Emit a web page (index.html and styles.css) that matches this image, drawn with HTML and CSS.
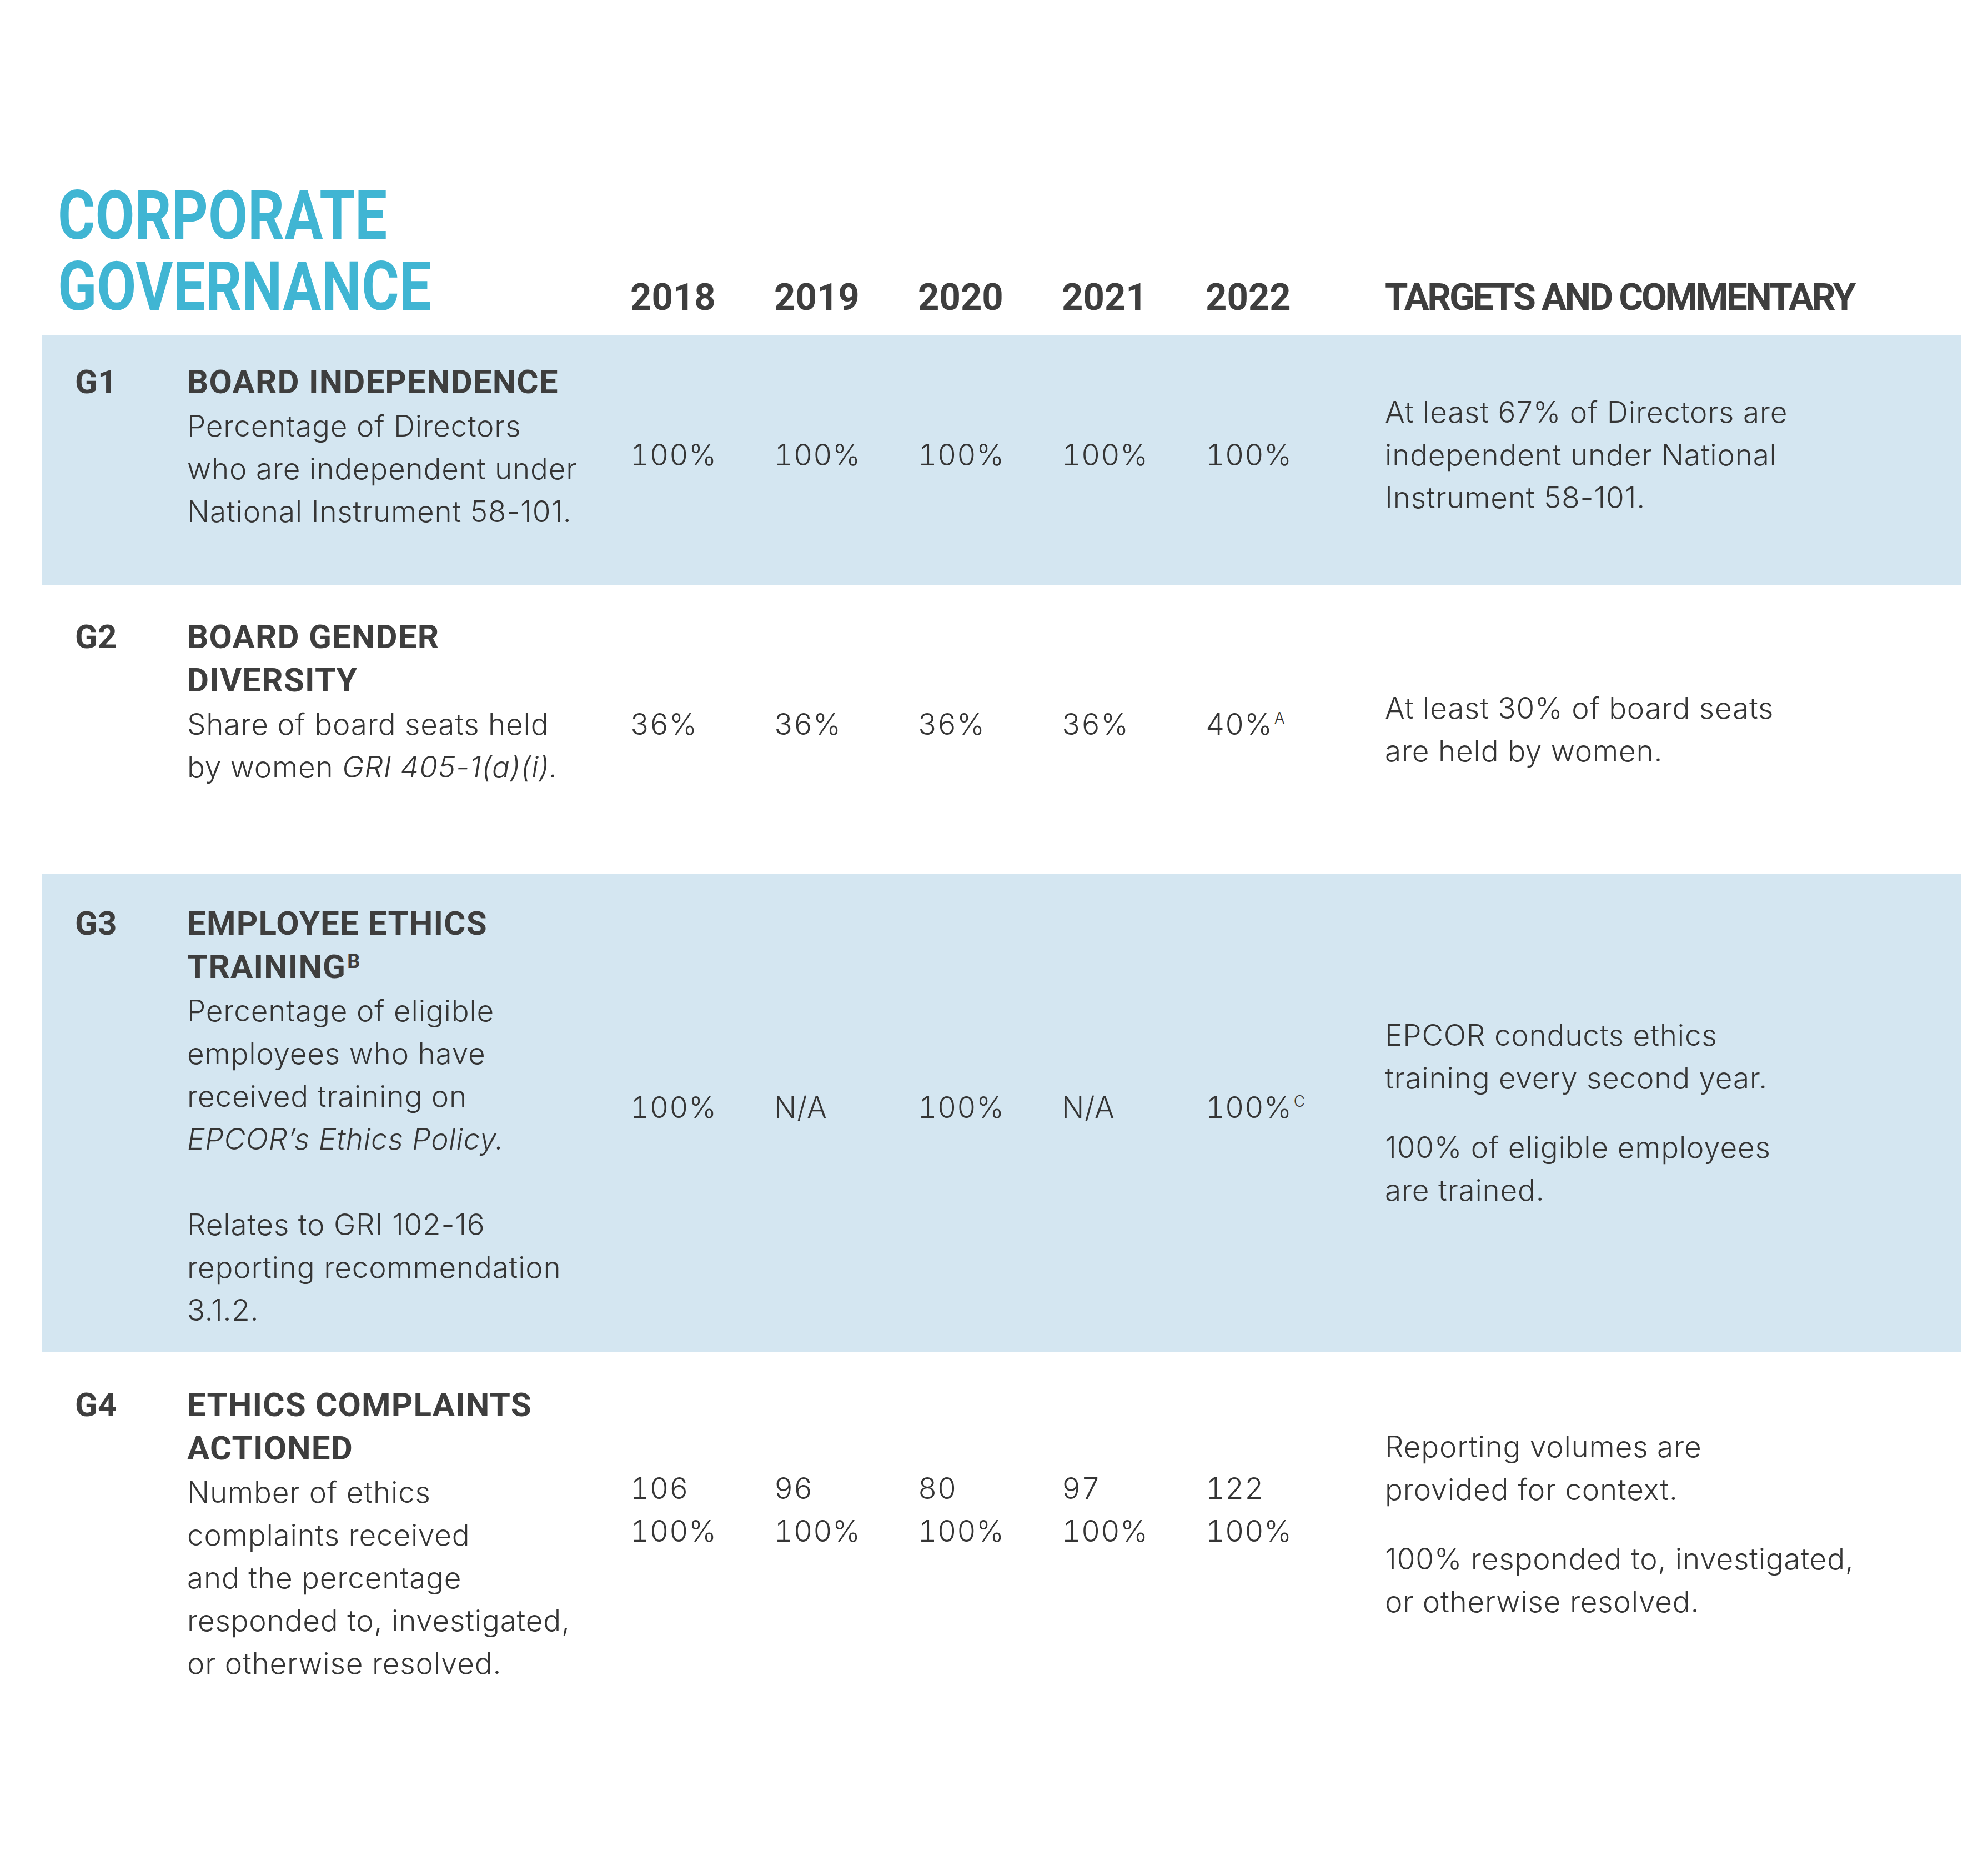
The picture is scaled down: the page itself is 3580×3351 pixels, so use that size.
FILE: index.html
```html
<!DOCTYPE html>
<html lang="en">
<head>
<meta charset="utf-8">
<title>Corporate Governance</title>
<link rel="stylesheet" href="styles.css">
</head>
<body>
<main class="sheet">
  <header class="head">
    <h1 class="title"><span class="title-text">CORPORATE<br>GOVERNANCE</span></h1>
    <div class="yr">2018</div>
    <div class="yr">2019</div>
    <div class="yr">2020</div>
    <div class="yr">2021</div>
    <div class="yr">2022</div>
    <div class="yr comm-head">TARGETS AND COMMENTARY</div>
  </header>

  <section class="row row--shaded row--g1">
    <div class="code">G1</div>
    <div class="metric">
      <h2 class="metric-title">BOARD INDEPENDENCE</h2>
      <p class="metric-desc">Percentage of Directors<br>who are independent under<br>National Instrument 58-101.</p>
    </div>
    <div class="val">100%</div>
    <div class="val">100%</div>
    <div class="val">100%</div>
    <div class="val">100%</div>
    <div class="val">100%</div>
    <div class="comment">
      <p>At least 67% of Directors are<br>independent under National<br>Instrument 58-101.</p>
    </div>
  </section>

  <section class="row row--g2">
    <div class="code">G2</div>
    <div class="metric">
      <h2 class="metric-title">BOARD GENDER<br>DIVERSITY</h2>
      <p class="metric-desc">Share of board seats held<br>by women <em>GRI 405-1(a)(i).</em></p>
    </div>
    <div class="val">36%</div>
    <div class="val">36%</div>
    <div class="val">36%</div>
    <div class="val">36%</div>
    <div class="val">40%<sup class="note">A</sup></div>
    <div class="comment">
      <p>At least 30% of board seats<br>are held by women.</p>
    </div>
  </section>

  <section class="row row--shaded row--g3">
    <div class="code">G3</div>
    <div class="metric">
      <h2 class="metric-title">EMPLOYEE ETHICS<br>TRAINING<sup class="note note--bold">B</sup></h2>
      <p class="metric-desc">Percentage of eligible<br>employees who have<br>received training on<br><em>EPCOR’s Ethics Policy.</em><br><br>Relates to GRI 102-16<br>reporting recommendation<br>3.1.2.</p>
    </div>
    <div class="val">100%</div>
    <div class="val">N/A</div>
    <div class="val">100%</div>
    <div class="val">N/A</div>
    <div class="val">100%<sup class="note">C</sup></div>
    <div class="comment">
      <p>EPCOR conducts ethics<br>training every second year.</p>
      <p>100% of eligible employees<br>are trained.</p>
    </div>
  </section>

  <section class="row row--g4">
    <div class="code">G4</div>
    <div class="metric">
      <h2 class="metric-title">ETHICS COMPLAINTS<br>ACTIONED</h2>
      <p class="metric-desc">Number of ethics<br>complaints received<br>and the percentage<br>responded to, investigated,<br>or otherwise resolved.</p>
    </div>
    <div class="val">106<br>100%</div>
    <div class="val">96<br>100%</div>
    <div class="val">80<br>100%</div>
    <div class="val">97<br>100%</div>
    <div class="val">122<br>100%</div>
    <div class="comment">
      <p>Reporting volumes are<br>provided for context.</p>
      <p>100% responded to, investigated,<br>or otherwise resolved.</p>
    </div>
  </section>
</main>
</body>
</html>
```

FILE: styles.css
```css
html, body {
  margin: 0;
  padding: 0;
  background: #ffffff;
}

body {
  color: #353535;
  font-family: Inter, "Liberation Sans", sans-serif;
}

.sheet {
  width: 3455px;
  margin-left: 76px;
  padding-bottom: 300px;
}

/* ---------- heading row ---------- */
.head {
  display: grid;
  grid-template-columns: 1031px 259px 259px 259px 259px 323px 1fr;
  align-items: last baseline;
  padding: 325px 0 0 28px;
  margin-bottom: 22px;
}

.title {
  margin: 0;
  font-family: Roboto, "Liberation Sans", sans-serif;
  font-weight: 700;
  font-size: 122px;
  line-height: 128px;
  color: #40b5d3;
}

.title-text {
  display: inline-block;
  transform: scaleX(0.845);
  transform-origin: left center;
  white-space: nowrap;
}

.yr {
  font-family: Roboto, "Liberation Sans", sans-serif;
  font-weight: 700;
  font-size: 67px;
  line-height: 80px;
  color: #3e3e3e;
  white-space: nowrap;
}

.comm-head {
  letter-spacing: -0.05em;
}

/* ---------- data rows ---------- */
.row {
  display: grid;
  grid-template-columns: 202px 798px 259px 259px 259px 259px 323px 1fr;
  padding-left: 59px;
  box-sizing: border-box;
  --pad: 50px;
}

.row--shaded {
  background: #d4e6f1;
}

.row--g1 { --pad: 46px; min-height: 451px; }
.row--g2 { --pad: 54px; min-height: 519px; }
.row--g3 { --pad: 51px; min-height: 861px; }
.row--g4 { --pad: 57px; }

.code {
  align-self: start;
  margin-top: var(--pad);
  font-family: Roboto, "Liberation Sans", sans-serif;
  font-weight: 700;
  font-size: 60px;
  line-height: 78px;
  color: #3e3e3e;
}

.metric {
  align-self: start;
  margin-top: var(--pad);
}

.metric-title {
  margin: 0;
  font-family: Roboto, "Liberation Sans", sans-serif;
  font-weight: 700;
  font-size: 60px;
  line-height: 78px;
  letter-spacing: 0.02em;
  color: #3e3e3e;
  white-space: nowrap;
}

.metric-desc {
  margin: 2px 0 0;
  font-weight: 300;
  font-size: 53px;
  line-height: 77px;
  letter-spacing: 0.015em;
  white-space: nowrap;
}

.val {
  align-self: center;
  padding-bottom: 18px;
  font-weight: 300;
  font-size: 53px;
  line-height: 77px;
  letter-spacing: 0.015em;
  font-variant-numeric: tabular-nums;
  white-space: nowrap;
}

.row--g4 .val {
  padding-bottom: 30px;
}

.comment {
  align-self: center;
  font-weight: 300;
  font-size: 53px;
  line-height: 77px;
  letter-spacing: 0.015em;
  white-space: nowrap;
}

.row--g1 .comment { margin-bottom: 18px; }
.row--g4 .comment { margin-top: 22px; }

.comment p {
  margin: 0;
}

.comment p + p {
  margin-top: 48px;
}

em {
  font-style: italic;
}

.note {
  font-size: 28px;
  line-height: 0;
  vertical-align: 20px;
  margin-left: 3px;
  letter-spacing: 0;
  font-variant-numeric: normal;
}

.note--bold {
  font-size: 36px;
  vertical-align: 18px;
  margin-left: 2px;
}
```
